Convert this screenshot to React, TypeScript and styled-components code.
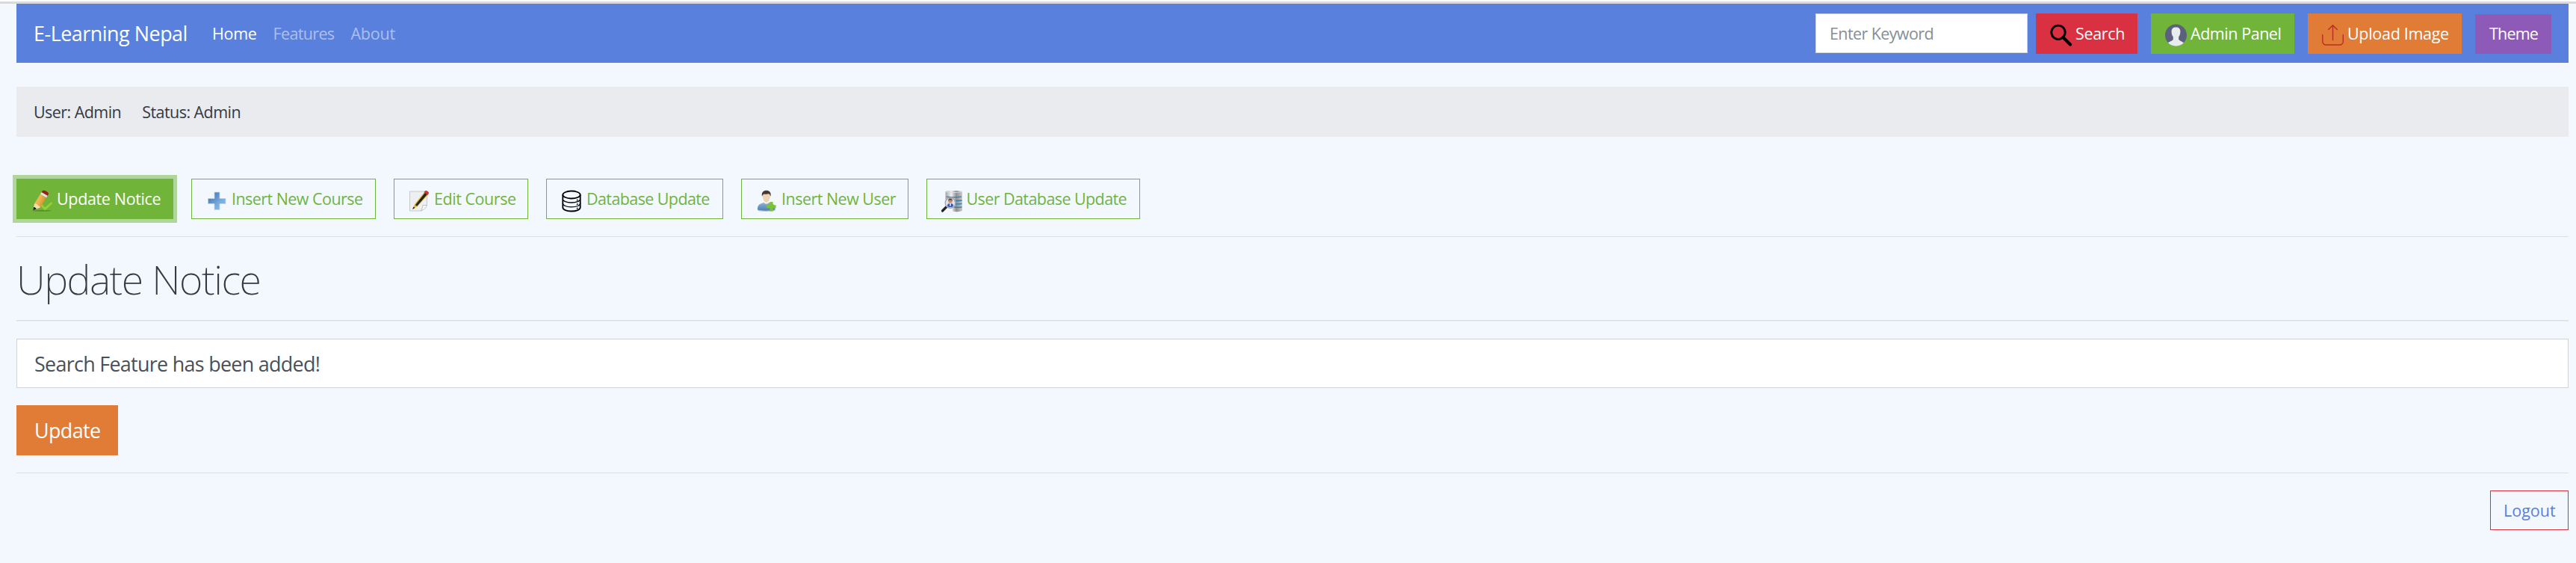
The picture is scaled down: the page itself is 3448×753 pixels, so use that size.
import React from 'react';
import styled, { createGlobalStyle } from 'styled-components';

const GlobalStyle = createGlobalStyle`
  *, *::before, *::after { box-sizing: border-box; }
  body {
    margin: 0;
    background: #f3f8ff;
    color: #343a40;
    font-family: "Open Sans", "Noto Sans", sans-serif;
    font-size: 21.5px;
    line-height: 30px;
  }
`;

const Page = styled.div`
  min-height: 753px;
  border-top: 2px solid #fff;
`;

const TopRule = styled.div`
  height: 3px;
  background: #d9dadd;
`;

const Container = styled.div`
  padding: 0 10px 0 22px;
`;

const Navbar = styled.nav`
  display: flex;
  align-items: center;
  height: 79px;
  padding: 0 23px 0 23px;
  background: #5980dd;
`;

const Brand = styled.a`
  width: 216px;
  margin-right: 23px;
  color: #fff;
  font-size: 26.9px;
  line-height: 34px;
  letter-spacing: -0.48px;
  white-space: nowrap;
`;

const NavLinks = styled.div`
  display: flex;
  flex: 1;
  gap: 22px;
`;

const NavLink = styled.a<{ $active?: boolean; $spacing: number }>`
  color: ${(p) => (p.$active ? '#fff' : 'rgba(255, 255, 255, 0.5)')};
  letter-spacing: ${(p) => p.$spacing}px;
  white-space: nowrap;
`;

const SearchInput = styled.input`
  width: 284px;
  height: 53px;
  margin: 0 11px 0 0;
  padding: 0 18px;
  border: 1px solid #ced4da;
  border-radius: 0;
  background: #fff;
  font: inherit;
  letter-spacing: -0.6px;
  &::placeholder { color: #868e96; opacity: 1; }
`;

const Actions = styled.div`
  display: flex;
  align-items: flex-end;
  gap: 18px;
`;

const Button = styled.button<{ $bg: string; $width: number; $spacing: number }>`
  display: flex;
  align-items: center;
  flex: none;
  gap: 4px;
  width: ${(p) => p.$width}px;
  height: 54px;
  margin: 0;
  padding: 0 0 0 19px;
  border: 0;
  background: ${(p) => p.$bg};
  color: #fff;
  font: inherit;
  letter-spacing: ${(p) => p.$spacing}px;
  white-space: nowrap;
  svg { flex: none; margin-top: 5px; }
`;

const ThemeButton = styled(Button)`
  height: 53px;
`;

const ToolButton = styled(Button)<{ $focused?: boolean }>`
  padding-left: 19px;
  border: 1px solid #70b43a;
  color: ${(p) => (p.$focused ? '#fff' : '#70b43a')};
  box-shadow: ${(p) => (p.$focused ? '0 0 0 5px rgba(112, 180, 58, 0.5)' : 'none')};
`;

const StatusBar = styled.div`
  display: flex;
  align-items: center;
  gap: 28px;
  height: 67px;
  margin-top: 32px;
  padding-left: 23px;
  background: #eaebee;
  letter-spacing: -0.55px;
`;

const Toolbar = styled.div`
  display: flex;
  gap: 24px;
  margin-top: 56px;
`;

const Divider = styled.hr<{ $top: number; $double?: boolean }>`
  height: ${(p) => (p.$double ? 2 : 1)}px;
  margin: ${(p) => p.$top}px 0 0;
  border: 0;
  border-bottom: ${(p) => (p.$double ? '1px solid #e6ebf1' : '0')};
  background: #dadfe5;
`;

const Title = styled.h1`
  margin: 22px 0 0;
  font-family: "Noto Sans", sans-serif;
  font-size: 54px;
  font-weight: 200;
  line-height: 68px;
  letter-spacing: -1.5px;
`;

const NoticeInput = styled.input`
  display: block;
  width: 100%;
  height: 66px;
  margin: 23px 0 23px;
  padding: 0 23px;
  border: 1px solid #ced4da;
  border-radius: 0;
  background: #fff;
  color: #495057;
  font: inherit;
  font-size: 26.9px;
  letter-spacing: -0.7px;
`;

const UpdateButton = styled.button`
  display: block;
  width: 136px;
  height: 67px;
  padding: 1px 0 0 24px;
  border: 0;
  background: #e07c36;
  color: #fff;
  font: inherit;
  font-size: 26.9px;
  letter-spacing: -0.6px;
  text-align: left;
`;

const Footer = styled.footer`
  display: flex;
  justify-content: flex-end;
  margin-top: 23px;
`;

const LogoutButton = styled.a`
  display: flex;
  align-items: center;
  width: 105px;
  height: 53px;
  padding-left: 17px;
  border: 1px solid #d93040;
  color: #5980dd;
`;

const iconProps = { width: 30, height: 30, viewBox: '0 0 30 30', fill: 'none' };

const SearchIcon = () => (
  <svg {...iconProps}>
    <circle cx="11" cy="11.3" r="9.2" stroke="#000" strokeWidth="2.9" />
    <path d="M17.5 18 27 27.4" stroke="#000" strokeWidth="4.2" strokeLinecap="round" />
  </svg>
);

const AvatarIcon = () => (
  <svg {...iconProps}>
    <circle cx="14.5" cy="15" r="14.5" fill="#5c5f7d" />
    <path
      d="M14.5 4.5c4 0 5.9 2 5.9 5.6 0 3-.6 5.6-2.2 7.1v3.6c1 2 4.6 2.4 6.7 4.5A14.5 14.5 0 0 1 4.100 25.300c2.1-2.1 5.7-2.5 6.7-4.5v-3.6c-1.600-1.500-2.200-4.100-2.200-7.100 0-3.600 1.900-5.600 5.900-5.600Z"
      fill="#e8eced"
    />
  </svg>
);

const UploadIcon = () => (
  <svg {...iconProps} stroke="#bd2b26" strokeWidth="1.4" strokeLinecap="round" strokeLinejoin="round">
    <path d="M.8 14.5v9a4.500 4.500 0 0 0 4.500 4.500h18.500a4.500 4.500 0 0 0 4.500-4.500v-9M14.500 21.500V1.800M8.700 7.500l5.800-5.700 5.800 5.700" />
  </svg>
);

const PencilCheckIcon = () => (
  <svg {...iconProps}>
    <defs>
      <linearGradient id="pencilBody" x1="0" y1="0" x2="1" y2=".5">
        <stop offset="0" stopColor="#f5cf6b" />
        <stop offset=".55" stopColor="#e8b24d" />
        <stop offset="1" stopColor="#c98a2e" />
      </linearGradient>
    </defs>
    <ellipse cx="14" cy="27.800" rx="12.500" ry="1" fill="#4c7d2a" opacity=".65" />
    <path d="m13.500 20.500 4.800 5 9.200-8.500" stroke="#93d12f" strokeWidth="3" />
    <path d="M4 18.500 12 5.500l8 4.800L12 23.500Z" fill="url(#pencilBody)" />
    <path d="M4 18.500 2.500 27 12 23.500c-1-2-2-2.500-3.500-3-1-1.500-2.500-2-4.500-2Z" fill="#f3dfb4" />
    <path d="m3.200 23-.9 4.300 4.300-1.700c-.6-1.500-1.700-2.400-3.400-2.600Z" fill="#181818" />
    <path d="m12 5.500 1.700-2.600 8 4.800-1.700 2.600Z" fill="#e4e4e6" />
    <path d="m13.700 2.900 1.500-2.100c2.800-.7 6.700 1.300 8 4.200l-1.500 2.700Z" fill="#98201d" />
  </svg>
);

const PlusIcon = () => (
  <svg {...iconProps}>
    <defs>
      <linearGradient id="plusFill" x1="0" y1="0" x2="1" y2="1">
        <stop offset=".2" stopColor="#4f7fb8" />
        <stop offset=".6" stopColor="#76abde" />
        <stop offset="1" stopColor="#8fc0ec" />
      </linearGradient>
    </defs>
    <path d="M11 3h7v8.500h8v7h-8V26.500h-7v-8H2.500v-7H11Z" fill="url(#plusFill)" stroke="#c3d6ec" strokeWidth=".8" />
  </svg>
);

const NoteIcon = () => (
  <svg {...iconProps}>
    <path d="M1.500 2h23v17.500L17 28H1.500Z" fill="#eeeff0" stroke="#c6c9cc" />
    <path d="M24.500 20c-2 1-4 1-5.500.3 0 2.500-.8 5-2.500 7.500 4-1 7-4 8-7.800Z" fill="#fff" stroke="#b9bcc0" />
    <path d="M5.500 25.500 8 19 21.500 2.200l4.800 3.800L12 22Z" fill="#e5ba38" />
    <path d="M8.800 20.200 22.300 3.200l3 2.400L11.200 21.800Z" fill="#262626" />
    <path d="m20.500 3.300 1.700-2.200c1.800-.8 4.500 1 5 3l-1.700 2.900Z" fill="#c23a35" />
    <path d="m5 26 1.500-3.500 2 1.500Z" fill="#222" />
  </svg>
);

const DatabaseIcon = () => (
  <svg {...iconProps} stroke="#000" strokeWidth="1.8">
    <ellipse cx="14" cy="6.500" rx="11.700" ry="5" />
    <path d="M2.300 6.500v17c0 2.800 5.200 5 11.700 5s11.700-2.200 11.700-5v-17" />
    <path d="M2.300 12.500c0 2.500 5.200 4.500 11.700 4.500s11.700-2 11.700-4.500M2.300 18.300c0 2.500 5.200 4.500 11.700 4.500s11.700-2 11.700-4.500" strokeWidth="1.3" />
    <path d="M21.700 12.800v1.800M21.700 18.200V20M21.700 23.700v1.800" strokeWidth="1.6" />
  </svg>
);

const AddUserIcon = () => (
  <svg {...iconProps}>
    <defs>
      <linearGradient id="userBody" x1="0" y1="0" x2="0" y2="1">
        <stop offset="0" stopColor="#8db6d9" />
        <stop offset="1" stopColor="#4e80b0" />
      </linearGradient>
    </defs>
    <ellipse cx="14" cy="27.500" rx="12" ry="1.500" fill="#b9c6d2" />
    <path d="M2 26.500c-.5-5 2-7.500 5.500-8.500l4-1.500h5l4 1.500c3.500 1 5.500 3.500 5 8.500-6 1.600-18 1.600-23.500 0Z" fill="url(#userBody)" />
    <path d="M10 16.500c2 3 5.500 3 7.500 0l-1.500-2h-4.500Z" fill="#f6efe4" />
    <path d="M8.800 7c0 6 2 9.500 5 9.500s5-3.500 5-9.500c0-3-10-3-10 0Z" fill="#ecd3b1" />
    <path d="M8 9C7 3.500 9.500.8 13.800.8S20.500 3.500 19.500 9c-.7-2.500-1.500-3.500-3-3.700-2 .6-4 .5-5.500.2C9.200 6 8.500 7 8 9Z" fill="#4a3733" />
    <path d="M18.500 16h4v4.300h4v4h-4v4.300h-4v-4.300h-4.300v-4h4.300Z" fill="#7cc529" />
  </svg>
);

const UserDatabaseIcon = () => (
  <svg {...iconProps}>
    <defs>
      <linearGradient id="serverFill" x1="0" y1="0" x2="1" y2="0">
        <stop offset="0" stopColor="#a2a4a8" />
        <stop offset=".35" stopColor="#f0f0f1" />
        <stop offset=".65" stopColor="#8b8e93" />
        <stop offset="1" stopColor="#c9cbce" />
      </linearGradient>
    </defs>
    <path d="M5.500 2c5-1.500 17-1.500 22.500 0v26c-5 1.600-9 1.600-13 .5V20H5.500Z" fill="url(#serverFill)" />
    <path d="M5.500 2.300c5 1.600 17 1.600 22.500 0" stroke="#d8dadd" />
    <path d="M6.500 9.200c6 .8 15 .8 20.500 0M16 14.200c4 .5 8 .3 11.500-.2M17 18.500c4 .5 7.500.3 10.500-.2M17 23c4 .5 7.500.3 10.500-.2" stroke="#347fae" strokeWidth="1.3" />
    <path d="m1.500 28 5.500-5.500" stroke="#242424" strokeWidth="3.2" strokeLinecap="round" />
    <circle cx="12" cy="17.500" r="6.800" fill="#dde3ec" stroke="#a4a9b1" strokeWidth="1.4" />
    <path d="M8 21.500c0-3 2-3.500 4-3.500s4 .5 4 3.500c-2 2-6 2-8 0Z" fill="#3356bd" />
    <circle cx="12" cy="14.800" r="2.800" fill="#c68d73" />
    <path d="M9.200 14.500c0-4 5.600-4 5.600 0-1.600-1.200-4-1.200-5.600 0Z" fill="#653b2c" />
    <path d="M12 18v3.500" stroke="#fff" strokeWidth="1.4" />
  </svg>
);

const tools = [
  { label: 'Update Notice', Icon: PencilCheckIcon, width: 210, spacing: -0.35, focused: true },
  { label: 'Insert New Course', Icon: PlusIcon, width: 247, spacing: -0.55 },
  { label: 'Edit Course', Icon: NoteIcon, width: 180, spacing: -0.45 },
  { label: 'Database Update', Icon: DatabaseIcon, width: 237, spacing: -0.6 },
  { label: 'Insert New User', Icon: AddUserIcon, width: 223.5, spacing: -0.52 },
  { label: 'User Database Update', Icon: UserDatabaseIcon, width: 286, spacing: -0.58 },
];

export default function App() {
  return (
    <Page>
      <GlobalStyle />
      <TopRule />
      <Container>
        <Navbar>
          <Brand>E-Learning Nepal</Brand>
          <NavLinks>
            <NavLink $active $spacing={-0.3}>Home</NavLink>
            <NavLink $spacing={-0.65}>Features</NavLink>
            <NavLink $spacing={-0.2}>About</NavLink>
          </NavLinks>
          <SearchInput placeholder="Enter Keyword" />
          <Actions>
            <Button $bg="#da3142" $width={136} $spacing={-0.35}><SearchIcon />Search</Button>
            <Button $bg="#70b43a" $width={192} $spacing={-0.45}><AvatarIcon />Admin Panel</Button>
            <Button $bg="#e07c36" $width={206} $spacing={-0.3}><UploadIcon />Upload Image</Button>
            <ThemeButton $bg="#8d5ab7" $width={102} $spacing={-0.8}>Theme</ThemeButton>
          </Actions>
        </Navbar>
        <StatusBar>
          <span>User: Admin</span>
          <span>Status: Admin</span>
        </StatusBar>
        <Toolbar>
          {tools.map(({ label, Icon, width, spacing, focused }) => (
            <ToolButton
              key={label}
              $bg={focused ? '#70b43a' : 'transparent'}
              $width={width}
              $spacing={spacing}
              $focused={focused}
            >
              <Icon />
              {label}
            </ToolButton>
          ))}
        </Toolbar>
        <Divider $top={23} />
        <Title>Update Notice</Title>
        <Divider $top={21} $double />
        <NoticeInput defaultValue="Search Feature has been added!" />
        <UpdateButton>Update</UpdateButton>
        <Divider $top={23} />
        <Footer>
          <LogoutButton>Logout</LogoutButton>
        </Footer>
      </Container>
    </Page>
  );
}
